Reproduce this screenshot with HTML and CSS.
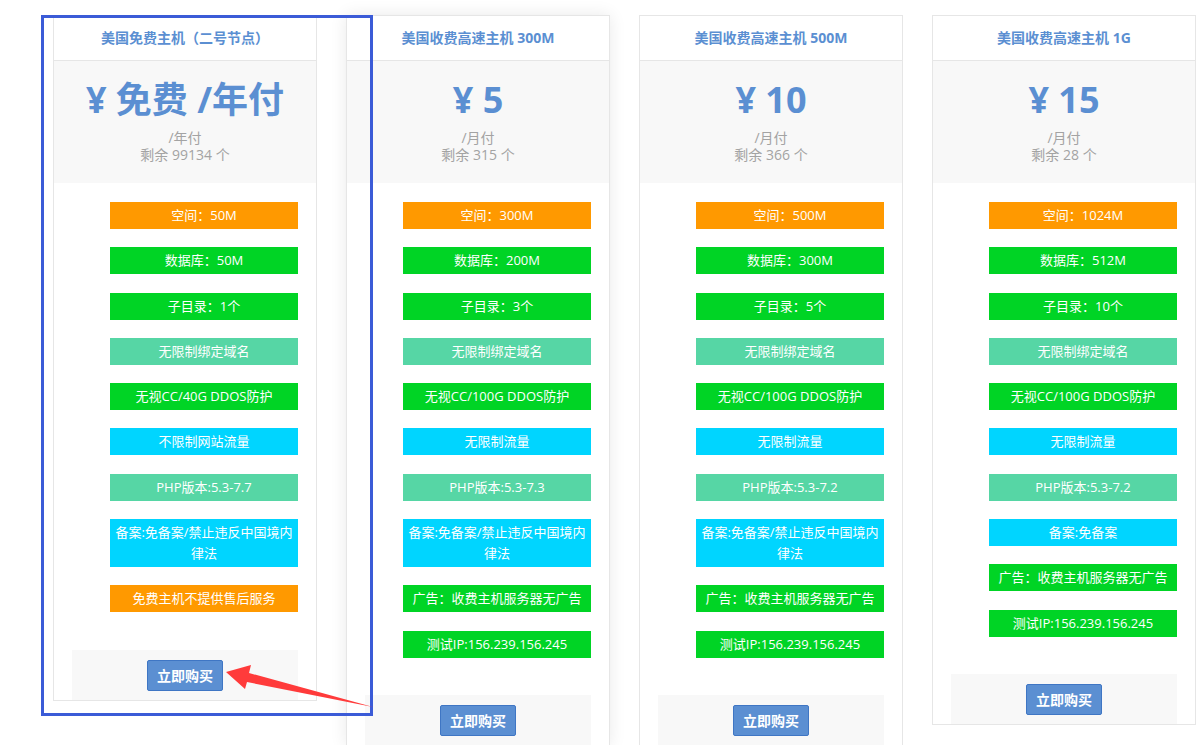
FILE: index.html
```html
<!DOCTYPE html>
<html lang="zh-CN">
<head>
<meta charset="utf-8">
<title>主机套餐</title>
<link rel="stylesheet" href="styles.css">
</head>
<body>
<div class="plans">
  <div class="card">
    <div class="card-title">美国免费主机（二号节点）</div>
    <div class="card-price">
      <div class="price">¥ 免费 /年付</div>
      <div class="sub">/年付</div>
      <div class="sub">剩余 99134 个</div>
    </div>
    <div class="card-body">
      <ul class="tags">
        <li class="tag orange">空间：50M</li>
        <li class="tag green">数据库：50M</li>
        <li class="tag green">子目录：1个</li>
        <li class="tag teal">无限制绑定域名</li>
        <li class="tag green">无视CC/40G DDOS防护</li>
        <li class="tag cyan">不限制网站流量</li>
        <li class="tag teal">PHP版本:5.3-7.7</li>
        <li class="tag cyan">备案:免备案/禁止违反中国境内律法</li>
        <li class="tag orange">免费主机不提供售后服务</li>
      </ul>
      <div class="buy"><button class="btn">立即购买</button></div>
    </div>
  </div>

  <div class="card hover">
    <div class="card-title">美国收费高速主机 300M</div>
    <div class="card-price">
      <div class="price">¥ 5</div>
      <div class="sub">/月付</div>
      <div class="sub">剩余 315 个</div>
    </div>
    <div class="card-body">
      <ul class="tags">
        <li class="tag orange">空间：300M</li>
        <li class="tag green">数据库：200M</li>
        <li class="tag green">子目录：3个</li>
        <li class="tag teal">无限制绑定域名</li>
        <li class="tag green">无视CC/100G DDOS防护</li>
        <li class="tag cyan">无限制流量</li>
        <li class="tag teal">PHP版本:5.3-7.3</li>
        <li class="tag cyan">备案:免备案/禁止违反中国境内律法</li>
        <li class="tag green">广告：收费主机服务器无广告</li>
        <li class="tag green">测试IP:156.239.156.245</li>
      </ul>
      <div class="buy"><button class="btn">立即购买</button></div>
    </div>
  </div>

  <div class="card">
    <div class="card-title">美国收费高速主机 500M</div>
    <div class="card-price">
      <div class="price">¥ 10</div>
      <div class="sub">/月付</div>
      <div class="sub">剩余 366 个</div>
    </div>
    <div class="card-body">
      <ul class="tags">
        <li class="tag orange">空间：500M</li>
        <li class="tag green">数据库：300M</li>
        <li class="tag green">子目录：5个</li>
        <li class="tag teal">无限制绑定域名</li>
        <li class="tag green">无视CC/100G DDOS防护</li>
        <li class="tag cyan">无限制流量</li>
        <li class="tag teal">PHP版本:5.3-7.2</li>
        <li class="tag cyan">备案:免备案/禁止违反中国境内律法</li>
        <li class="tag green">广告：收费主机服务器无广告</li>
        <li class="tag green">测试IP:156.239.156.245</li>
      </ul>
      <div class="buy"><button class="btn">立即购买</button></div>
    </div>
  </div>

  <div class="card">
    <div class="card-title">美国收费高速主机 1G</div>
    <div class="card-price">
      <div class="price">¥ 15</div>
      <div class="sub">/月付</div>
      <div class="sub">剩余 28 个</div>
    </div>
    <div class="card-body">
      <ul class="tags">
        <li class="tag orange">空间：1024M</li>
        <li class="tag green">数据库：512M</li>
        <li class="tag green">子目录：10个</li>
        <li class="tag teal">无限制绑定域名</li>
        <li class="tag green">无视CC/100G DDOS防护</li>
        <li class="tag cyan">无限制流量</li>
        <li class="tag teal">PHP版本:5.3-7.2</li>
        <li class="tag cyan">备案:免备案</li>
        <li class="tag green">广告：收费主机服务器无广告</li>
        <li class="tag green">测试IP:156.239.156.245</li>
      </ul>
      <div class="buy"><button class="btn">立即购买</button></div>
    </div>
  </div>
</div>

<div class="highlight-box"></div>
<svg class="arrow" width="1204" height="745" viewBox="0 0 1204 745" xmlns="http://www.w3.org/2000/svg">
  <polygon points="226,672 251,665 249,673 373,707 247,682 245,689" fill="#ff3b3b"/>
</svg>
</body>
</html>
```

FILE: styles.css
```css
* { box-sizing: border-box; }

html, body {
  margin: 0;
  padding: 0;
  background: #ffffff;
}

body {
  font-family: "Open Sans", "Noto Sans CJK SC", sans-serif;
  color: #333;
}

.plans {
  display: flex;
  align-items: flex-start;
  gap: 29px;
  padding: 15px 0 0 53px;
}

.card {
  width: 264px;
  flex: 0 0 264px;
  border: 1px solid #e6e6e6;
  background: #fff;
}

.card.hover {
  box-shadow: 0 0 16px rgba(0, 0, 0, 0.09);
}

.card-title {
  height: 45px;
  line-height: 44px;
  border-bottom: 1px solid #e6e6e6;
  text-align: center;
  font-size: 14px;
  font-weight: 700;
  color: #5b8fd2;
}

.card-price {
  background: #f8f8f8;
  text-align: center;
  padding: 19px 0 20px;
  height: 122px;
}

.price {
  font-size: 36px;
  line-height: 40px;
  font-weight: 700;
  color: #5b8fd2;
  margin-bottom: 9px;
}

.sub {
  font-size: 14px;
  line-height: 17px;
  color: #a3a3a3;
}

.card-body {
  padding: 19px 18px 0 18px;
}

.tags {
  list-style: none;
  margin: 0;
  padding: 0 0 19px 38px;
}

.tag {
  color: #fff;
  font-size: 13px;
  line-height: 21px;
  padding: 3px 0;
  text-align: center;
  margin-bottom: 18.3px;
}

.orange { background: #ff9900; }
.green { background: #00d425; }
.teal { background: #56d6a5; }
.cyan { background: #00d5ff; }

.buy {
  height: 50px;
  background: #f8f8f8;
  display: flex;
  align-items: center;
  justify-content: center;
}

.btn {
  width: 76px;
  height: 31px;
  padding: 0;
  border: 1px solid #3f76c4;
  border-radius: 2px;
  background: #5b8fd2;
  color: #fff;
  font-family: "Open Sans", "Noto Sans CJK SC", sans-serif;
  font-size: 14px;
  font-weight: 700;
  line-height: 29px;
  margin-top: 1px;
}

.highlight-box {
  position: absolute;
  left: 41px;
  top: 15px;
  width: 332px;
  height: 701px;
  border: 3px solid #3b5bd7;
  pointer-events: none;
}

.arrow {
  position: absolute;
  left: 0;
  top: 0;
  pointer-events: none;
}
```
